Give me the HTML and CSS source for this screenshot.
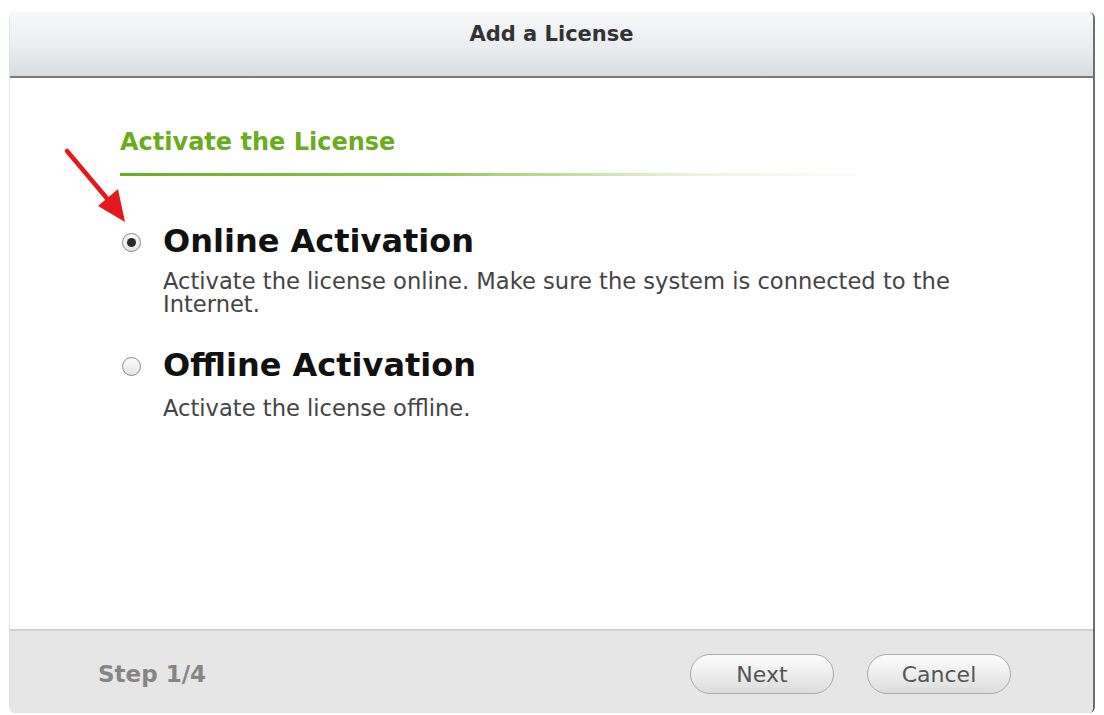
FILE: index.html
```html
<!DOCTYPE html>
<html lang="en">
  <head>
    <meta charset="UTF-8" />
    <meta name="viewport" content="width=device-width, initial-scale=1.0" />
    <title>Add a License</title>
    <link rel="stylesheet" href="styles.css">
  </head>
  <body>
    <div class="dialog">
      <div class="dialog-header">Add a License</div>

      <div class="dialog-body">
        <h2 class="section-title">Activate the License</h2>
        <div class="section-rule"></div>

        <label class="option">
          <span class="radio checked"></span>
          <span class="option-title">Online Activation</span>
        </label>
        <p class="option-desc">Activate the license online. Make sure the system is connected to the Internet.</p>

        <label class="option second">
          <span class="radio"></span>
          <span class="option-title">Offline Activation</span>
        </label>
        <p class="option-desc last">Activate the license offline.</p>
      </div>

      <div class="dialog-footer">
        <span class="step">Step 1/4</span>
        <div class="actions">
          <button class="btn">Next</button>
          <button class="btn">Cancel</button>
        </div>
      </div>
    </div>

    <!-- red pointer arrow drawn over the dialog -->
    <svg class="pointer" width="80" height="90" viewBox="0 0 80 90">
      <line x1="5" y1="5" x2="48" y2="56" stroke="#e3191b" stroke-width="4.5" stroke-linecap="round" />
      <polygon points="63,76 36,60 56,43" fill="#e3191b" />
    </svg>
  </body>
</html>
```

FILE: styles.css
```css
body {
  margin: 0;
  background-color: #fff;
  font-family: "DejaVu Sans", Verdana, sans-serif;
  position: relative;
  width: 1104px;
  height: 715px;
  overflow: hidden;
}
.dialog {
  margin: 12px 0 0 9px;
  width: 1086px;
  height: 701px;
  display: flex;
  flex-direction: column;
  border-left: 1px solid #e2e2e2;
  border-right: 2px solid #6e6e6e;
  border-radius: 6px;
  box-sizing: border-box;
  overflow: hidden;
}
.dialog-header {
  display: flex;
  justify-content: center;
  background: linear-gradient(#f6f8fa, #e9ecee 60%, #d8dcdf);
  border-bottom: 2px solid #7a7a7a;
  padding-top: 10px;
  height: 54px;
  font-size: 21px;
  line-height: 24px;
  font-weight: bold;
  color: #333;
}
.dialog-body {
  flex: 1;
  padding: 50px 0 0 110px;
}
.section-title {
  margin: 0;
  font-size: 24px;
  line-height: 28px;
  color: #6aac1e;
  font-weight: bold;
}
.section-rule {
  margin-top: 17px;
  width: 752px;
  height: 3px;
  background: linear-gradient(to right, #6aae22, #8cc44e 40%, #e9f2d8 75%, rgba(255, 255, 255, 0));
}
.option {
  display: flex;
  align-items: center;
  margin-top: 47px;
}
.option.second {
  margin-top: 31px;
}
.radio {
  width: 19px;
  height: 19px;
  border-radius: 50%;
  border: 1px solid #8a8a8a;
  background: linear-gradient(#fafafa, #e4e4e4);
  box-sizing: border-box;
  display: flex;
  align-items: center;
  justify-content: center;
  margin: 3px 22px 0 2px;
}
.radio.checked::after {
  content: "";
  width: 9px;
  height: 9px;
  border-radius: 50%;
  background-color: #2a2a2a;
}
.option-title {
  font-size: 32px;
  line-height: 36px;
  font-weight: bold;
  color: #111;
}
.option-desc {
  margin: 11px 0 0 43px;
  width: 840px;
  font-size: 22.6px;
  line-height: 23px;
  color: #444;
}
.option-desc.last {
  margin-top: 14px;
}
.dialog-footer {
  height: 84px;
  background-color: #e6e6e6;
  border-top: 2px solid #cfcfcf;
  box-sizing: border-box;
  display: flex;
  align-items: center;
  justify-content: space-between;
  padding: 4px 82px 0 88px;
}
.step {
  font-size: 23px;
  font-weight: bold;
  color: #858585;
}
.actions {
  display: flex;
  gap: 33px;
}
.btn {
  width: 144px;
  height: 40px;
  border: 1px solid #a9a9a9;
  border-radius: 20px;
  background: linear-gradient(#fdfdfd, #ececec 55%, #dcdcdc);
  font-family: "DejaVu Sans", Verdana, sans-serif;
  font-size: 22px;
  color: #555;
  cursor: pointer;
}
.pointer {
  position: absolute;
  left: 62px;
  top: 146px;
}
```
